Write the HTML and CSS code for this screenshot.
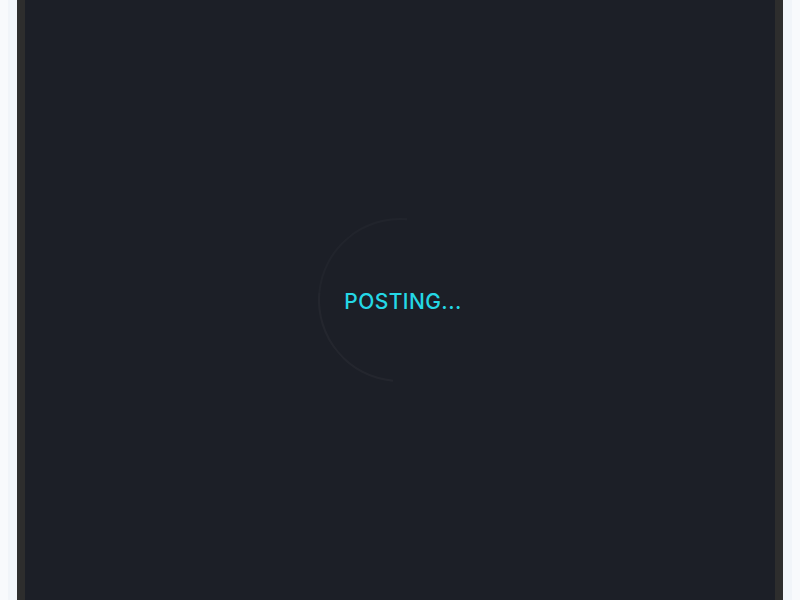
FILE: index.html
```html
<!DOCTYPE html>
<html>
<head>
<meta charset="utf-8">
<link rel="stylesheet" href="styles.css">
</head>
<body>
<div class="wrap">
  <div class="frame">
    <div class="loader">
      <div class="ring"></div>
      <div class="label">POSTING...</div>
    </div>
  </div>
</div>
</body>
</html>
```
FILE: styles.css
```css
html, body { height: 100%; }
body {
  margin: 0 8px;
  background: #f8fafc;
  overflow: hidden;
  font-family: Inter, "Noto Sans", sans-serif;
}
.wrap {
  background: #f1f5f9;
  padding: 0 9px;
  height: 600px;
}
.frame {
  height: 600px;
  background: #1c1f27;
  border-left: 8px solid #2d2d2d;
  border-right: 8px solid #2d2d2d;
  display: flex;
  align-items: center;
  justify-content: center;
}
.loader {
  position: relative;
  width: 164px;
  height: 164px;
  display: flex;
  align-items: center;
  justify-content: center;
}
.ring {
  position: absolute;
  inset: 0;
  border-radius: 50%;
  border: 2px solid transparent;
  border-top-color: rgba(255,255,255,0.025);
  border-left-color: rgba(255,255,255,0.035);
  transform: rotate(-40deg);
}
.label {
  color: #24d8e6;
  font-size: 21px;
  font-weight: 500;
  letter-spacing: 0.02em;
  position: relative;
  top: 1px;
  left: 3px;
}
```
